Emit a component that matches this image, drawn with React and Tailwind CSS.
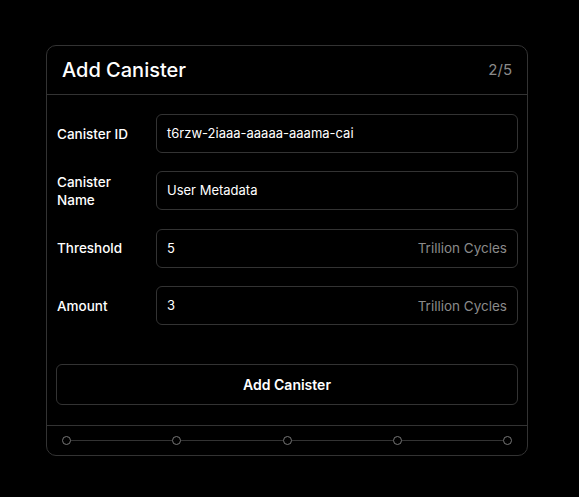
import React from 'react';

const fields = [
  { label: 'Canister ID', value: 't6rzw-2iaaa-aaaaa-aaama-cai' },
  { label: 'Canister Name', value: 'User Metadata' },
  { label: 'Threshold', value: '5', unit: 'Trillion Cycles' },
  { label: 'Amount', value: '3', unit: 'Trillion Cycles' },
];

function Field({ label, value, unit }) {
  return (
    <div className="flex items-center">
      <div className="w-[100px] shrink-0 pl-px pr-[12px] text-[13.5px] leading-[18px] font-medium text-white">
        {label}
      </div>
      <div className="flex h-[39px] flex-1 items-center justify-between rounded-[6px] border border-[#333] bg-black pl-[10px] pr-[10px]">
        <span className="text-[13px] text-white">{value}</span>
        {unit && <span className="text-[13.5px] text-[#8a8a8a]">{unit}</span>}
      </div>
    </div>
  );
}

export default function App() {
  const steps = [0, 1, 2, 3, 4];

  return (
    <div
      className="min-h-[497px] bg-black pl-[46px] pt-[45px]"
      style={{ fontFamily: 'Inter, "Noto Sans", sans-serif' }}
    >
      <div className="w-[482px] rounded-[10px] border border-[#333] bg-black">
        {/* Header */}
        <div className="flex h-[49px] items-center justify-between border-b border-[#333] px-[15px]">
          <h1 className="text-[20px] font-medium text-white">Add Canister</h1>
          <span className="text-[15px] text-[#8a8a8a]">2/5</span>
        </div>

        {/* Body */}
        <div className="px-[9px] pt-[19px] pb-[20px]">
          <div className="flex flex-col gap-[18.4px]">
            {fields.map((f) => (
              <Field key={f.label} {...f} />
            ))}
          </div>
          <button className="mt-[39px] flex h-[41px] w-full items-center justify-center rounded-[6px] border border-[#333] bg-black text-[14px] font-semibold text-white">
            Add Canister
          </button>
        </div>

        {/* Stepper */}
        <div className="flex h-[30px] items-center border-t border-[#333] px-[15px]">
          {steps.map((s, i) => (
            <React.Fragment key={s}>
              <div className="h-[9px] w-[9px] shrink-0 rounded-full border border-[#777]" />
              {i < steps.length - 1 && <div className="h-px flex-1 bg-[#333]" />}
            </React.Fragment>
          ))}
        </div>
      </div>
    </div>
  );
}
